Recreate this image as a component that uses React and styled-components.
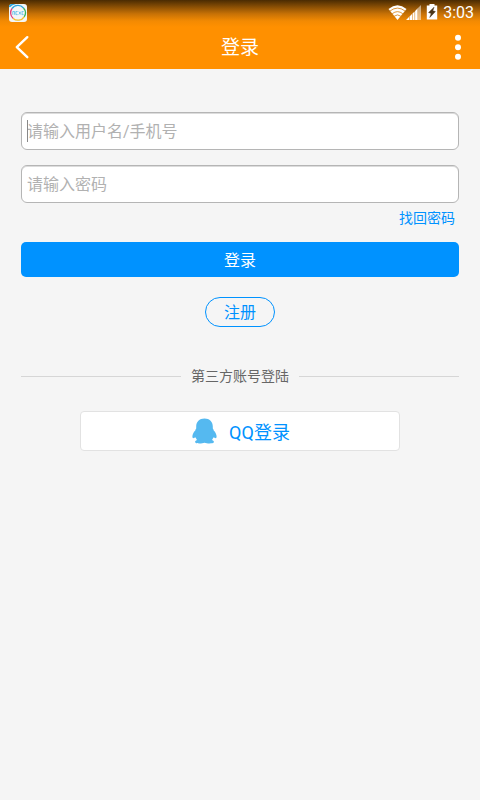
import { useState } from 'react';
import styled, { createGlobalStyle, ThemeProvider } from 'styled-components';

const theme = {
    colors: {
        orange: '#ff9000',
        blue: '#0092ff',
        background: '#f5f5f5',
        white: '#fff',
        placeholder: '#b1b1b1',
        border: '#b5b5b5',
        line: '#d6d6d6',
        darkgray: '#666',
    },
    fonts: {
        sans: 'Roboto, "Noto Sans CJK SC", sans-serif',
    },
    fontSizes: {
        s: '14px',
        m: '16px',
        l: '18px',
        xl: '19px',
    },
};

const GlobalStyle = createGlobalStyle`
    * {
        box-sizing: border-box;
    }

    body {
        margin: 0;
        background: ${props => props.theme.colors.background};
        font-family: ${props => props.theme.fonts.sans};
    }

    button, input {
        font-family: inherit;
    }

    button {
        padding: 0;
        border: 0;
        background: none;
        cursor: pointer;
    }
`;

const Top = styled.header`
    background: linear-gradient(#4a2b02 0, #8a4f04 7px, #c87206 14px, #f38a02 21px, ${props => props.theme.colors.orange} 27px);
    color: ${props => props.theme.colors.white};
`;

const StatusBar = styled.div`
    height: 25px;
    padding: 0 6px 0 9px;
    display: flex;
    justify-content: space-between;
    align-items: center;
`;

const StatusIcons = styled.div`
    display: flex;
    align-items: center;
`;

const Battery = styled.span`
    display: flex;
    margin-left: 5px;
    padding-bottom: 2px;
`;

const Time = styled.span`
    margin-left: 5px;
    font-size: ${props => props.theme.fontSizes.m};
    line-height: 24px;
`;

const NavBar = styled.div`
    height: 44px;
    display: grid;
    grid-template-columns: 44px 1fr 44px;
    align-items: center;
`;

const NavButton = styled.button`
    height: 44px;
    display: flex;
    justify-content: center;
    align-items: center;
    color: inherit;
`;

const Title = styled.h1`
    margin: 0;
    padding-top: 2px;
    font-size: ${props => props.theme.fontSizes.xl};
    font-weight: 400;
    line-height: 42px;
    text-align: center;
`;

const Main = styled.main`
    padding: 43px 21px;
    display: flex;
    flex-direction: column;
    align-items: center;
`;

const Form = styled.form`
    width: 100%;
    display: flex;
    flex-direction: column;
`;

const Field = styled.div`
    position: relative;
    margin-bottom: ${props => props.$last ? '4px' : '15px'};
`;

const Input = styled.input`
    display: block;
    width: 100%;
    height: 38px;
    padding: 0 5px;
    border: 1px solid ${props => props.theme.colors.border};
    border-radius: 6px;
    background: ${props => props.theme.colors.white};
    box-shadow: inset 0 1px 0 #dcdcdc;
    font-size: ${props => props.theme.fontSizes.m};
    outline: none;

    &::placeholder {
        color: ${props => props.theme.colors.placeholder};
        opacity: 1;
    }
`;

const Caret = styled.span`
    position: absolute;
    top: 8px;
    left: 6px;
    width: 1px;
    height: 22px;
    background: #888;
    pointer-events: none;
`;

const ForgotLink = styled.a`
    align-self: flex-end;
    margin: 0 4px 13px 0;
    color: ${props => props.theme.colors.blue};
    font-size: ${props => props.theme.fontSizes.s};
    line-height: 22px;
    text-decoration: none;
`;

const LoginButton = styled.button`
    height: 35px;
    padding-bottom: 2px;
    border-radius: 5px;
    background: ${props => props.theme.colors.blue};
    color: ${props => props.theme.colors.white};
    font-size: ${props => props.theme.fontSizes.m};
`;

const RegisterButton = styled.button`
    width: 70px;
    height: 30px;
    margin-top: 20px;
    padding-top: 2px;
    border: 1px solid ${props => props.theme.colors.blue};
    border-radius: 15px;
    color: ${props => props.theme.colors.blue};
    font-size: ${props => props.theme.fontSizes.m};
    line-height: 26px;
`;

const Divider = styled.div`
    width: 100%;
    margin: 38px 0 24px;
    display: flex;
    align-items: center;
    gap: 10px;
    color: ${props => props.theme.colors.darkgray};
    font-size: ${props => props.theme.fontSizes.s};
    line-height: 22px;

    &::before, &::after {
        content: '';
        flex: 1;
        height: 1px;
        background: ${props => props.theme.colors.line};
    }
`;

const QQButton = styled.button`
    width: 100%;
    max-width: 320px;
    height: 40px;
    padding-left: 2px;
    display: flex;
    justify-content: center;
    align-items: center;
    gap: 12px;
    border: 1px solid #e2e2e2;
    border-radius: 4px;
    background: ${props => props.theme.colors.white};
    color: ${props => props.theme.colors.blue};
    font-size: ${props => props.theme.fontSizes.l};
`;

const AppIcon = () => (
    <svg width="18" height="18" viewBox="0 0 18 18" aria-hidden="true">
        <rect width="18" height="18" rx="3" fill="#f4f6f6" />
        <g fill="none" strokeWidth="1.3">
            <path d="M3 4.5A7.3 7.3 0 0 1 14.5 4" stroke="#2aa4dc" />
            <path d="M14.5 4A7.3 7.3 0 0 1 15.2 12.8" stroke="#35b558" />
            <path d="M15.2 12.8A7.3 7.3 0 0 1 4 14.2" stroke="#f2c02c" />
            <path d="M4 14.2A7.3 7.3 0 0 1 3 4.5" stroke="#e0437c" />
        </g>
        <path d="M0 3Q0 0 3 0H7Q3 .8 1 3.2Z" fill="#2aa4dc" />
        <path d="M3.8 10.8V7.5H5.6V10.8M8.6 7.5H6.9V10.6H8.6M9.8 7.5L12 10.6M12 7.5L9.8 10.6M14.6 7.5H13.1V10.6H14.6" fill="none" stroke="#55bde6" strokeWidth=".8" />
    </svg>
);

const WifiIcon = () => (
    <svg width="18" height="16" viewBox="0 0 18 16" overflow="visible" aria-hidden="true">
        <path d="M9.5 15L.5 4Q9.5-3.4 18.5 4Z" fill="#fff" />
        <g fill="none" stroke="#d67b08" strokeWidth=".8">
            <path d="M2 6Q9.5 .2 17 6" />
            <path d="M4.2 8.7Q9.5 4.6 14.8 8.7" />
            <path d="M6.2 11.2Q9.5 8.6 12.8 11.2" />
        </g>
    </svg>
);

const SignalIcon = () => (
    <svg width="15" height="16" viewBox="0 0 15 16" aria-hidden="true">
        <path d="M11.5 3.5L15 0V15H11.5Z" fill="#fff" opacity=".5" />
        <path d="M0 15L3 12V15ZM3.5 15V11.5L6 9V15ZM6.5 15V8.5L8.6 6.4V15ZM9.1 15V5.9L11.5 3.5V15Z" fill="#fff" />
    </svg>
);

const BatteryIcon = () => (
    <svg width="12" height="16" viewBox="0 0 12 16" aria-hidden="true">
        <path d="M3.5 0H8.5V1.5H11.2V15.5H.8V1.5H3.5Z" fill="#fff" />
        <path d="M8 3.2L2.6 8.6L5.2 9.4L3.8 13.4L9.4 7.6L6.8 6.8Z" fill="#4a3518" stroke="#4a3518" strokeWidth=".5" />
    </svg>
);

const BackIcon = () => (
    <svg width="14" height="24" viewBox="0 0 14 24" aria-hidden="true">
        <path d="M12.3 2.2L1.8 12.2L12.3 22.2" fill="none" stroke="#fff" strokeWidth="2.4" strokeLinecap="round" strokeLinejoin="round" />
    </svg>
);

const MoreIcon = () => (
    <svg width="6" height="26" viewBox="0 0 6 26" aria-hidden="true">
        <g fill="#fff">
            <circle cx="3" cy="3.7" r="3" />
            <circle cx="3" cy="13.2" r="3" />
            <circle cx="3" cy="22.7" r="3" />
        </g>
    </svg>
);

const QQIcon = () => (
    <svg width="25" height="26" viewBox="0 0 25 26" aria-hidden="true">
        <path d="M12.5 .5C7.4 .5 4.2 4 4.2 8.5V10.5C3.6 11 3.3 11.7 3.3 12.5C1.5 14.2 .4 16.5 .4 18.6C.4 20.2 1.3 20.6 2.2 19.8L3.8 19.6C3.9 20.6 4.4 21.4 5 22C3.6 22.5 2.9 23.3 3.1 24.2C3.5 25.7 9.8 25.7 12.5 24.7C15.2 25.7 21.5 25.7 21.9 24.2C22.1 23.3 21.4 22.5 20 22C20.6 21.4 21.1 20.6 21.2 19.6L22.8 19.8C23.7 20.6 24.6 20.2 24.6 18.6C24.6 16.5 23.5 14.2 21.7 12.5C21.7 11.7 21.4 11 20.8 10.5V8.5C20.8 4 17.6 .5 12.5 .5Z" fill="#55b9f0" />
    </svg>
);

function App() {

    const [username, setUsername] = useState('');
    const [password, setPassword] = useState('');

    return(
        <ThemeProvider theme={theme}>
            <GlobalStyle />
            <Top>
                <StatusBar>
                    <AppIcon />
                    <StatusIcons>
                        <WifiIcon />
                        <SignalIcon />
                        <Battery>
                            <BatteryIcon />
                        </Battery>
                        <Time>3:03</Time>
                    </StatusIcons>
                </StatusBar>
                <NavBar>
                    <NavButton type='button' aria-label='返回'>
                        <BackIcon />
                    </NavButton>
                    <Title>登录</Title>
                    <NavButton type='button' aria-label='更多'>
                        <MoreIcon />
                    </NavButton>
                </NavBar>
            </Top>
            <Main>
                <Form onSubmit={e => e.preventDefault()}>
                    <Field>
                        <Input
                            type='text'
                            aria-label='用户名/手机号'
                            placeholder='请输入用户名/手机号'
                            value={username}
                            onChange={e => setUsername(e.target.value)}
                        />
                        {username === '' && <Caret />}
                    </Field>
                    <Field $last={true}>
                        <Input
                            type='password'
                            aria-label='密码'
                            placeholder='请输入密码'
                            value={password}
                            onChange={e => setPassword(e.target.value)}
                        />
                    </Field>
                    <ForgotLink href='#forgot'>找回密码</ForgotLink>
                    <LoginButton type='submit'>登录</LoginButton>
                </Form>
                <RegisterButton type='button'>注册</RegisterButton>
                <Divider>第三方账号登陆</Divider>
                <QQButton type='button'>
                    <QQIcon />
                    QQ登录
                </QQButton>
            </Main>
        </ThemeProvider>
    )

};

export default App;
